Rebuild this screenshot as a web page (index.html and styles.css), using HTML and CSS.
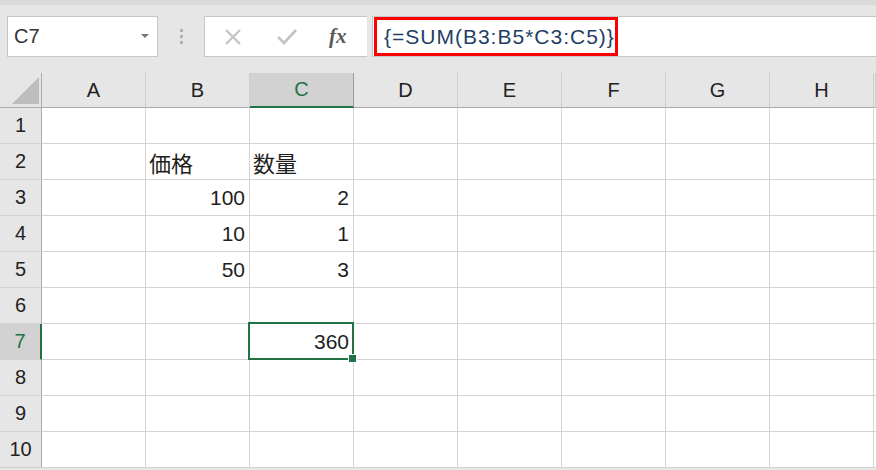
FILE: index.html
```html
<!DOCTYPE html>
<html lang="ja">
<head>
    <meta charset="UTF-8">
    <title>Excel</title>
    <link rel="stylesheet" href="styles.css">
</head>
<body>
    <div class="topStrip"></div>
    <div class="toolbar">
        <div class="nameBox">
            <span>C7</span>
            <span class="drop"></span>
        </div>
        <div class="grip"><i></i><i></i><i></i></div>
        <div class="btnBox">
            <svg class="ico" width="20" height="20" viewBox="0 0 20 20"><path d="M3 3 L17 17 M17 3 L3 17" stroke="#c3c3c3" stroke-width="2.2" fill="none"/></svg>
            <svg class="ico" width="22" height="20" viewBox="0 0 22 20"><path d="M2 10 L8 16 L20 3" stroke="#c3c3c3" stroke-width="2.6" fill="none"/></svg>
            <span class="fx">fx</span>
        </div>
        <div class="formula">
            <span class="formulaText">{=SUM(B3:B5*C3:C5)}</span>
        </div>
    </div>
    <div class="sheet">
        <div class="corner"><span class="tri"></span></div>
        <div class="colHead">A</div>
        <div class="colHead">B</div>
        <div class="colHead sel">C</div>
        <div class="colHead">D</div>
        <div class="colHead">E</div>
        <div class="colHead">F</div>
        <div class="colHead">G</div>
        <div class="colHead">H</div>
        <div class="colHead"></div>

        <div class="rowHead">1</div>
        <div class="cell"></div><div class="cell"></div><div class="cell"></div><div class="cell"></div><div class="cell"></div><div class="cell"></div><div class="cell"></div><div class="cell"></div><div class="cell"></div>

        <div class="rowHead">2</div>
        <div class="cell"></div><div class="cell jp">価格</div><div class="cell jp">数量</div><div class="cell"></div><div class="cell"></div><div class="cell"></div><div class="cell"></div><div class="cell"></div><div class="cell"></div>

        <div class="rowHead">3</div>
        <div class="cell"></div><div class="cell num">100</div><div class="cell num">2</div><div class="cell"></div><div class="cell"></div><div class="cell"></div><div class="cell"></div><div class="cell"></div><div class="cell"></div>

        <div class="rowHead">4</div>
        <div class="cell"></div><div class="cell num">10</div><div class="cell num">1</div><div class="cell"></div><div class="cell"></div><div class="cell"></div><div class="cell"></div><div class="cell"></div><div class="cell"></div>

        <div class="rowHead">5</div>
        <div class="cell"></div><div class="cell num">50</div><div class="cell num">3</div><div class="cell"></div><div class="cell"></div><div class="cell"></div><div class="cell"></div><div class="cell"></div><div class="cell"></div>

        <div class="rowHead">6</div>
        <div class="cell"></div><div class="cell"></div><div class="cell"></div><div class="cell"></div><div class="cell"></div><div class="cell"></div><div class="cell"></div><div class="cell"></div><div class="cell"></div>

        <div class="rowHead sel">7</div>
        <div class="cell"></div><div class="cell"></div><div class="cell num active">360</div><div class="cell"></div><div class="cell"></div><div class="cell"></div><div class="cell"></div><div class="cell"></div><div class="cell"></div>

        <div class="rowHead">8</div>
        <div class="cell"></div><div class="cell"></div><div class="cell"></div><div class="cell"></div><div class="cell"></div><div class="cell"></div><div class="cell"></div><div class="cell"></div><div class="cell"></div>

        <div class="rowHead">9</div>
        <div class="cell"></div><div class="cell"></div><div class="cell"></div><div class="cell"></div><div class="cell"></div><div class="cell"></div><div class="cell"></div><div class="cell"></div><div class="cell"></div>

        <div class="rowHead">10</div>
        <div class="cell"></div><div class="cell"></div><div class="cell"></div><div class="cell"></div><div class="cell"></div><div class="cell"></div><div class="cell"></div><div class="cell"></div><div class="cell"></div>
    </div>
</body>
</html>
```

FILE: styles.css
```css
* {
    margin: 0;
    padding: 0;
    box-sizing: border-box;
}
html, body {
    width: 876px;
    height: 470px;
    overflow: hidden;
}
body {
    background-color: #e6e6e6;
    font-family: "Liberation Sans", "Noto Sans CJK JP", sans-serif;
    color: #1e1e1e;
}
.topStrip {
    height: 5px;
    background-color: #dadada;
}
/* formula bar */
.toolbar {
    display: flex;
    align-items: stretch;
    height: 41px;
    margin-top: 11px;
    padding-left: 7px;
}
.nameBox {
    width: 151px;
    background-color: #fff;
    border: 1px solid #c6c6c6;
    display: flex;
    align-items: center;
    justify-content: space-between;
    padding: 0 8px 0 6px;
    font-size: 20px;
    color: #333;
}
.drop {
    width: 0;
    height: 0;
    border-left: 4px solid transparent;
    border-right: 4px solid transparent;
    border-top: 4px solid #777;
    margin-top: -2px;
}
.grip {
    width: 46px;
    display: flex;
    flex-direction: column;
    align-items: center;
    justify-content: center;
    gap: 3px;
}
.grip i {
    display: block;
    width: 3px;
    height: 3px;
    background-color: #b0b0b0;
}
.btnBox {
    width: 163px;
    background-color: #fff;
    border: 1px solid #c6c6c6;
    border-right: none;
    display: flex;
    align-items: center;
    padding-left: 18px;
    gap: 33px;
}
.ico {
    display: block;
}
.fx {
    font-family: "Liberation Serif", "DejaVu Serif", serif;
    font-style: italic;
    font-weight: bold;
    font-size: 21px;
    color: #5a5a5a;
    margin-left: -2px;
}
.formula {
    flex: 1;
    background-color: #fff;
    border: 1px solid #c6c6c6;
    border-right: none;
    margin-left: 5px;
    padding-left: 1px;
    display: flex;
    align-items: center;
}
.formulaText {
    display: flex;
    align-items: center;
    height: 39px;
    width: 244px;
    border: 3px solid #ff0000;
    padding-left: 7px;
    font-size: 21px;
    color: #1f3f66;
    letter-spacing: 1px;
    white-space: nowrap;
}
/* sheet */
.sheet {
    margin-top: 16px;
    display: grid;
    grid-template-columns: 42px repeat(8, 104px) 2px;
    grid-template-rows: 35px repeat(10, 36px);
    font-size: 21px;
}
.corner {
    background-color: #e6e6e6;
    border-right: 1px solid #ababab;
    border-bottom: 1px solid #ababab;
    position: relative;
}
.tri {
    position: absolute;
    left: 12px;
    top: 4px;
    width: 27px;
    height: 27px;
    background-color: #bdbdbd;
    clip-path: polygon(100% 0, 100% 100%, 0 100%);
}
.colHead {
    background-color: #e6e6e6;
    border-right: 1px solid #d0d0d0;
    border-bottom: 1px solid #ababab;
    display: flex;
    align-items: center;
    justify-content: center;
    color: #222;
    font-size: 20px;
}
.colHead.sel {
    background-color: #d2d2d2;
    border-right-color: #9b9b9b;
    border-bottom: 2px solid #217346;
    color: #217346;
}
.rowHead {
    background-color: #e6e6e6;
    border-right: 1px solid #ababab;
    border-bottom: 1px solid #d0d0d0;
    display: flex;
    align-items: center;
    justify-content: center;
    color: #222;
    font-size: 20px;
}
.rowHead.sel {
    background-color: #d2d2d2;
    border-right: 2px solid #217346;
    color: #217346;
}
.cell {
    background-color: #fff;
    border-right: 1px solid #d4d4d4;
    border-bottom: 1px solid #d4d4d4;
    display: flex;
    align-items: center;
    padding: 0 4px;
    white-space: nowrap;
    overflow: visible;
}
.cell.jp {
    font-family: "Noto Sans CJK JP", sans-serif;
    font-size: 22px;
    padding-left: 3px;
}
.cell.num {
    justify-content: flex-end;
}
.cell.active {
    position: relative;
}
.cell.active::before {
    content: "";
    position: absolute;
    left: -2px;
    top: -2px;
    right: -1px;
    bottom: -1px;
    border: 2px solid #217346;
}
.cell.active::after {
    content: "";
    position: absolute;
    right: -4px;
    bottom: -4px;
    width: 7px;
    height: 7px;
    background-color: #217346;
    border: 1px solid #fff;
}
```
